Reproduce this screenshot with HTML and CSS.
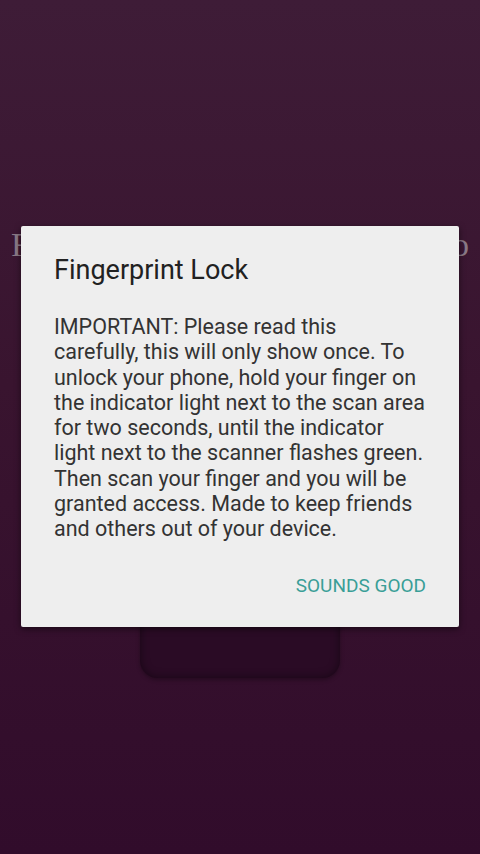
FILE: index.html
```html
<!DOCTYPE html>
<html>
<head>
<meta charset="utf-8">
<link rel="stylesheet" href="styles.css">
</head>
<body>
<div class="screen">
  <div class="bg-title"><span>Fingerprint</span><span>Scanner</span><span>Demo</span></div>
  <div class="scanner"></div>
</div>
<div class="dialog">
  <div class="dialog-title">Fingerprint Lock</div>
  <div class="dialog-body">IMPORTANT: Please read this<br>carefully, this will only show once. To<br>unlock your phone, hold your finger on<br>the indicator light next to the scan area<br>for two seconds, until the indicator<br>light next to the scanner flashes green.<br>Then scan your finger and you will be<br>granted access. Made to keep friends<br>and others out of your device.</div>
  <div class="dialog-actions"><span class="btn">SOUNDS GOOD</span></div>
</div>
</body>
</html>
```
FILE: styles.css
```css
html, body {
  margin: 0;
  padding: 0;
  width: 480px;
  height: 854px;
  overflow: hidden;
}
body {
  background: linear-gradient(180deg, #3e1c37 0%, #39142f 45%, #310c2b 100%);
  font-family: Roboto, "Noto Sans", sans-serif;
  position: relative;
}
.screen {
  display: flex;
  flex-direction: column;
  align-items: center;
  padding-top: 226px;
}
.bg-title {
  font-family: "Liberation Serif", serif;
  font-size: 34px;
  line-height: 38px;
  color: #8a7986;
  width: 458px;
  display: flex;
  justify-content: space-between;
  white-space: nowrap;
}
.scanner {
  margin-top: 324px;
  width: 200px;
  height: 90px;
  border-radius: 18px;
  background: #2a0b25;
  box-shadow: inset 0 0 10px rgba(0,0,0,0.45), 0 2px 4px rgba(0,0,0,0.3);
}
.dialog {
  position: absolute;
  left: 21px;
  top: 226px;
  width: 438px;
  height: 401px;
  box-sizing: border-box;
  background: #eeeeee;
  border-radius: 2px;
  box-shadow: 0 2px 6px rgba(0,0,0,0.5);
  padding: 27px 20px 0 33px;
  display: flex;
  flex-direction: column;
}
.dialog-title {
  font-size: 27px;
  line-height: 34px;
  color: #212121;
}
.dialog-body {
  margin-top: 27px;
  font-size: 21.5px;
  line-height: 25.3px;
  color: #333333;
  white-space: nowrap;
}
.dialog-actions {
  display: flex;
  justify-content: flex-end;
  padding-right: 13px;
  margin-top: 32px;
}
.btn {
  font-size: 19px;
  line-height: 24px;
  color: #3a9e97;
}
```
